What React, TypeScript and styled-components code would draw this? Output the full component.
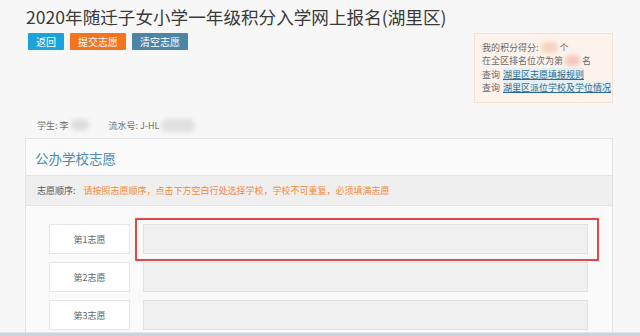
import React from "react";
import styled, { createGlobalStyle } from "styled-components";

const GlobalStyle = createGlobalStyle`
  html, body { margin: 0; padding: 0; background: #f7f7f7; }
  body {
    font-family: "Noto Sans CJK SC", "Noto Sans", sans-serif;
    color: #555;
    overflow: hidden;
  }
`;

const Screen = styled.div`
  width: 640px;
  height: 336px;
  display: flex;
  flex-direction: column;
  overflow: hidden;
`;

const Main = styled.main`
  flex: 1;
  min-height: 0;
  display: flex;
  flex-direction: column;
  padding: 0 27px 0 25px;
  overflow: hidden;
`;

const Header = styled.header`
  display: flex;
  justify-content: space-between;
  align-items: flex-start;
  height: 104px;
  flex-shrink: 0;
`;

const TitleBlock = styled.div`
  display: flex;
  flex-direction: column;
`;

const Title = styled.h1`
  margin: 0;
  padding: 4px 0 0 1px;
  font-size: 17.6px;
  line-height: 25px;
  font-weight: 400;
  color: #3a3a3a;
  white-space: nowrap;
`;

const ButtonRow = styled.div`
  display: flex;
  gap: 6px;
  margin: 4px 0 0 3px;
`;

const Btn = styled.button<{ $tone: string }>`
  height: 17px;
  padding: 0 8px;
  border: none;
  border-radius: 1px;
  background: ${(p) => p.$tone};
  color: #fff;
  font-family: inherit;
  font-size: 10px;
  line-height: 17px;
  cursor: pointer;
`;

const InfoBox = styled.aside`
  margin-top: 33px;
  width: 139px;
  box-sizing: border-box;
  padding: 7px 2px 8px 7px;
  background: #fdf3ec;
  border: 1px solid #f7e1d1;
  font-size: 9px;
  line-height: 13.3px;
  color: #6a6a6a;
  white-space: nowrap;
`;

const InfoLine = styled.div`
  display: flex;
  align-items: center;
`;

const InfoLink = styled.a`
  color: #2b6d90;
  text-decoration: underline;
  background: #e6eff3;
  margin-left: 3px;
`;

const Blur = styled.span<{ $w: number; $tone: string; $h?: number }>`
  display: inline-block;
  width: ${(p) => p.$w}px;
  height: ${(p) => p.$h ?? 11}px;
  border-radius: 6px;
  background: ${(p) => p.$tone};
  filter: blur(2px);
  vertical-align: middle;
  margin: 0 2px;
`;

const StudentRow = styled.div`
  flex-shrink: 0;
  display: flex;
  align-items: center;
  height: 26px;
  padding: 8px 0 0 12px;
  font-size: 9px;
  color: #707070;
`;

const Field = styled.span`
  display: inline-flex;
  align-items: center;
  margin-right: 18px;
`;

const Panel = styled.section`
  flex: 1;
  min-height: 0;
  background: #fafafa;
  border: 1px solid #e3e3e3;
  border-bottom: none;
  display: flex;
  flex-direction: column;
`;

const PanelTitle = styled.h2`
  margin: 0;
  height: 37px;
  padding: 1px 0 0 9px;
  box-sizing: border-box;
  line-height: 36px;
  font-size: 13.5px;
  font-weight: 400;
  color: #4f8bae;
  border-bottom: 1px solid #e4e4e4;
`;

const Notice = styled.div`
  height: 29px;
  line-height: 29px;
  padding-left: 11px;
  background: #efefef;
  border-bottom: 1px solid #e2e2e2;
  font-size: 9px;
  color: #5a5a5a;
  white-space: nowrap;
`;

const NoticeText = styled.span`
  color: #f5893a;
  margin-left: 8px;
`;

const Rows = styled.div`
  display: flex;
  flex-direction: column;
  gap: 8px;
  padding: 18px 24px 0 23px;
`;

const Row = styled.div`
  display: grid;
  grid-template-columns: 81px 1fr;
  column-gap: 13px;
  height: 30px;
`;

const RowLabel = styled.div`
  box-sizing: border-box;
  background: #fff;
  border: 1px solid #e6e6e6;
  font-size: 9px;
  color: #666;
  display: flex;
  align-items: center;
  justify-content: center;
`;

const InputCell = styled.div`
  position: relative;
  box-sizing: border-box;
  background: #f0f0f0;
  border: 1px solid #e1e1e1;
  cursor: pointer;
`;

const Highlight = styled.div`
  position: absolute;
  top: -7px;
  left: -9px;
  right: -12px;
  bottom: -8px;
  border: 2px solid #df4a4f;
  border-radius: 1px;
  box-shadow: 0 0 1px rgba(223, 74, 79, 0.6);
  pointer-events: none;
`;

const BottomBar = styled.div`
  height: 3px;
  flex-shrink: 0;
  background: #cbd3df;
  border-top: 1px solid #e3e8ef;
`;

const choices = ["第1志愿", "第2志愿", "第3志愿"];

export default function App() {
  return (
    <>
      <GlobalStyle />
      <Screen>
        <Main>
          <Header>
            <TitleBlock>
              <Title>2020年随迁子女小学一年级积分入学网上报名(湖里区)</Title>
              <ButtonRow>
                <Btn $tone="#1ba3dc">返回</Btn>
                <Btn $tone="#f5731c">提交志愿</Btn>
                <Btn $tone="#4c85a6">清空志愿</Btn>
              </ButtonRow>
            </TitleBlock>
            <InfoBox>
              <InfoLine>
                我的积分得分:<Blur $w={17} $tone="#f6d2bd" />个
              </InfoLine>
              <InfoLine>
                在全区排名位次为第<Blur $w={15} $tone="#f5c7bb" />名
              </InfoLine>
              <InfoLine>
                查询<InfoLink>湖里区志愿填报规则</InfoLink>
              </InfoLine>
              <InfoLine>
                查询<InfoLink>湖里区派位学校及学位情况</InfoLink>
              </InfoLine>
            </InfoBox>
          </Header>
          <StudentRow>
            <Field>
              学生: 李<Blur $w={18} $tone="#dedede" $h={12} />
            </Field>
            <Field>
              流水号: J-HL<Blur $w={34} $tone="#e0e0e0" $h={13} />
            </Field>
          </StudentRow>
          <Panel>
            <PanelTitle>公办学校志愿</PanelTitle>
            <Notice>
              志愿顺序:
              <NoticeText>
                请按照志愿顺序，点击下方空白行处选择学校，学校不可重复，必须填满志愿
              </NoticeText>
            </Notice>
            <Rows>
              {choices.map((c, i) => (
                <Row key={c}>
                  <RowLabel>{c}</RowLabel>
                  <InputCell>{i === 0 && <Highlight />}</InputCell>
                </Row>
              ))}
            </Rows>
          </Panel>
        </Main>
        <BottomBar />
      </Screen>
    </>
  );
}
